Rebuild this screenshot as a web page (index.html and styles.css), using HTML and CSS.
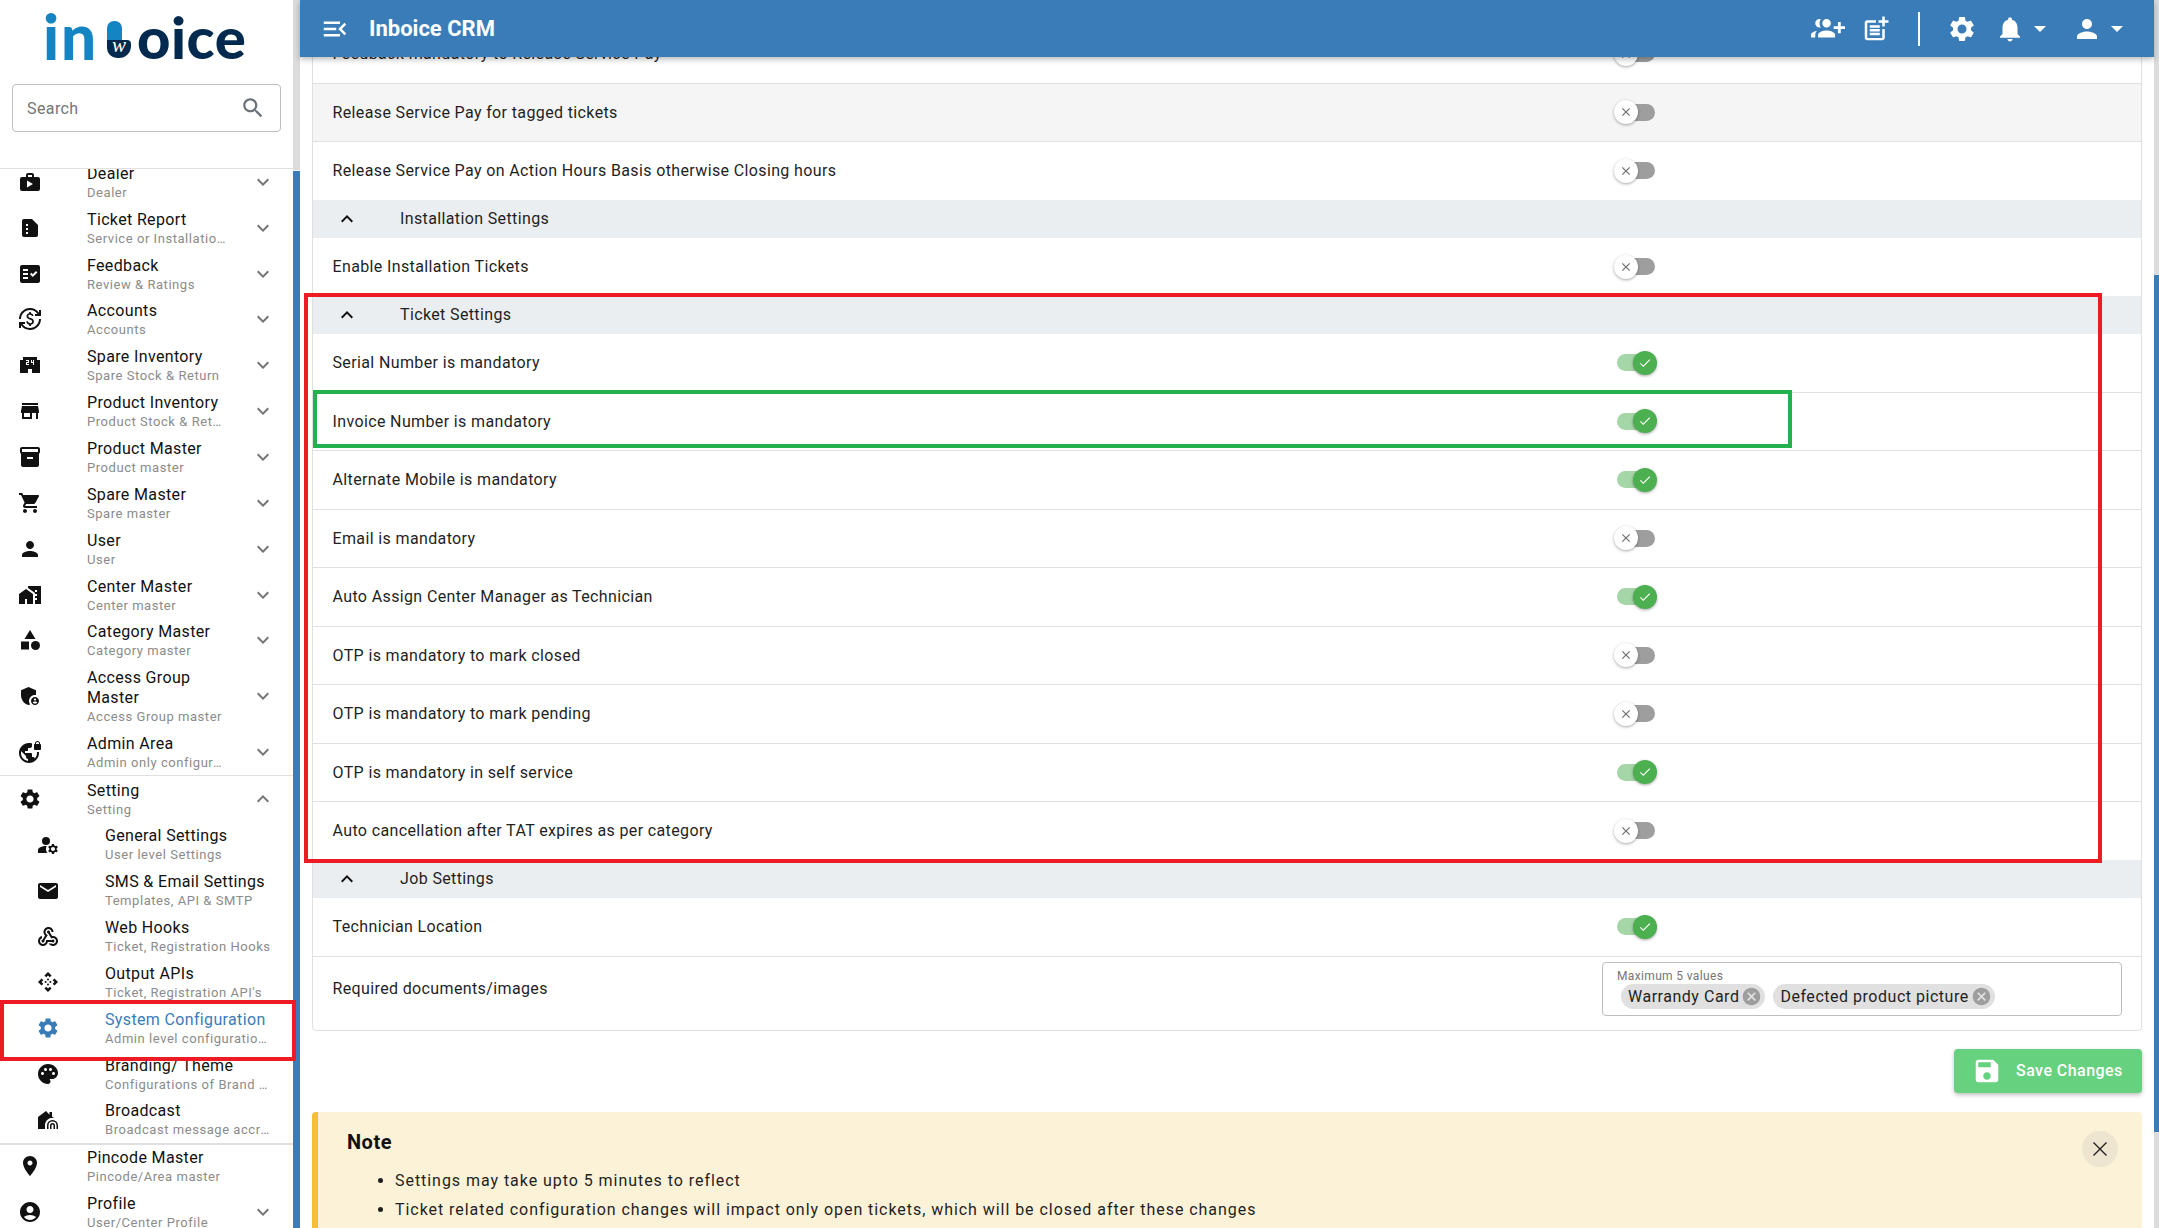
FILE: index.html
```html
<!DOCTYPE html>
<html lang="en">
<head>
    <meta charset="UTF-8">
    <meta name="viewport" content="width=device-width, initial-scale=1.0">
    <title>Inboice CRM</title>
    <link rel="stylesheet" href="styles.css">
</head>
<body>
    <svg class="sprite" xmlns="http://www.w3.org/2000/svg">
        <symbol id="i-menu-open" viewBox="0 0 24 24"><path d="M3 18h13v-2H3v2zm0-5h10v-2H3v2zm0-7v2h13V6H3zm18 9.59L17.42 12 21 8.41 19.59 7l-5 5 5 5L21 15.59z"/></symbol>
        <symbol id="i-group-add" viewBox="0 0 24 24"><path transform="matrix(-1 0 0 1 24 0)" d="M8 10H5V7H3v3H0v2h3v3h2v-3h3v-2zm10 1c1.66 0 2.99-1.34 2.99-3S19.66 5 18 5c-.32 0-.63.05-.91.14.57.81.9 1.79.9 2.86s-.34 2.04-.9 2.86c.28.09.59.14.91.14zm-5 0c1.66 0 2.99-1.34 2.99-3S14.66 5 13 5s-3 1.34-3 3 1.34 3 3 3zm6.62 2.16c.83.73 1.38 1.66 1.38 2.84v2h3v-2c0-1.54-2.37-2.49-4.38-2.84zM13 13c-2 0-6 1-6 3v2h12v-2c0-2-4-3-6-3z"/></symbol>
        <symbol id="i-post-add" viewBox="0 0 24 24"><path d="M17 19.22H5V7h7V5H5c-1.1 0-2 .9-2 2v12c0 1.1.9 2 2 2h12c1.1 0 2-.9 2-2v-7h-2v7.22z"/><path d="M19 2h-2v3h-3c.01.01 0 2 0 2h3v2.99c.01.01 2 0 2 0V7h3V5h-3V2z"/><path d="M7 9h8v2H7zM7 12h8v2H7zM7 15h8v2H7z"/></symbol>
        <symbol id="i-settings" viewBox="0 0 24 24"><path d="M19.14 12.94c.04-.3.06-.61.06-.94 0-.32-.02-.64-.07-.94l2.03-1.58c.18-.14.23-.41.12-.61l-1.92-3.32c-.12-.22-.37-.29-.59-.22l-2.39.96c-.5-.38-1.03-.7-1.62-.94l-.36-2.54c-.04-.24-.24-.41-.48-.41h-3.84c-.24 0-.43.17-.47.41l-.36 2.54c-.59.24-1.13.57-1.62.94l-2.39-.96c-.22-.08-.47 0-.59.22L2.74 8.87c-.12.21-.08.47.12.61l2.03 1.58c-.05.3-.09.63-.09.94s.02.64.07.94l-2.03 1.58c-.18.14-.23.41-.12.61l1.92 3.32c.12.22.37.29.59.22l2.39-.96c.5.38 1.03.7 1.62.94l.36 2.54c.05.24.24.41.48.41h3.84c.24 0 .44-.17.47-.41l.36-2.54c.59-.24 1.13-.56 1.62-.94l2.39.96c.22.08.47 0 .59-.22l1.92-3.32c.12-.22.07-.47-.12-.61l-2.01-1.58zM12 15.6c-1.98 0-3.6-1.62-3.6-3.6s1.62-3.6 3.6-3.6 3.6 1.62 3.6 3.6-1.62 3.6-3.6 3.6z"/></symbol>
        <symbol id="i-bell" viewBox="0 0 24 24"><path d="M12 22c1.1 0 2-.9 2-2h-4c0 1.1.89 2 2 2zm6-6v-5c0-3.07-1.64-5.64-4.5-6.32V4c0-.83-.67-1.5-1.5-1.5s-1.5.67-1.5 1.5v.68C7.63 5.36 6 7.92 6 11v5l-2 2v1h16v-1l-2-2z"/></symbol>
        <symbol id="i-person" viewBox="0 0 24 24"><path d="M12 12c2.21 0 4-1.79 4-4s-1.79-4-4-4-4 1.79-4 4 1.79 4 4 4zm0 2c-2.67 0-8 1.34-8 4v2h16v-2c0-2.66-5.33-4-8-4z"/></symbol>
        <symbol id="i-search" viewBox="0 0 24 24"><path d="M15.5 14h-.79l-.28-.27C15.41 12.59 16 11.11 16 9.5 16 5.91 13.09 3 9.5 3S3 5.91 3 9.5 5.91 16 9.5 16c1.61 0 3.09-.59 4.23-1.57l.27.28v.79l5 4.99L20.49 19l-4.99-5zm-6 0C7.01 14 5 11.99 5 9.5S7.01 5 9.5 5 14 7.01 14 9.5 11.99 14 9.5 14z"/></symbol>
        <symbol id="i-more" viewBox="0 0 24 24"><path d="M16.59 8.59 12 13.17 7.41 8.59 6 10l6 6 6-6z"/></symbol>
        <symbol id="i-less" viewBox="0 0 24 24"><path d="M12 8l-6 6 1.41 1.41L12 10.83l4.59 4.58L18 14z"/></symbol>
        <symbol id="i-dealer" viewBox="0 0 24 24"><path fill-rule="evenodd" d="M20 7h-4V5a2 2 0 0 0-2-2h-4a2 2 0 0 0-2 2v2H4a2 2 0 0 0-2 2v10a2 2 0 0 0 2 2h16a2 2 0 0 0 2-2V9a2 2 0 0 0-2-2zM10 5h4v2h-4V5zm-1 5.5v7l6-3.5-6-3.5z"/></symbol>
        <symbol id="i-report" viewBox="0 0 24 24"><path fill-rule="evenodd" d="M14 3H6a2 2 0 0 0-2 2v14a2 2 0 0 0 2 2h12a2 2 0 0 0 2-2V9l-6-6zM8 8h2v2H8V8zm0 4h2v2H8v-2zm0 4h2v2H8v-2z"/></symbol>
        <symbol id="i-fact" viewBox="0 0 24 24"><path d="M20 3H4c-1.1 0-2 .9-2 2v14c0 1.1.9 2 2 2h16c1.1 0 2-.9 2-2V5c0-1.1-.9-2-2-2zM10 17H5v-2h5v2zm0-4H5v-2h5v2zm0-4H5V7h5v2zm4.82 6L12 12.16l1.41-1.41 1.41 1.42L17.99 9l1.42 1.42L14.82 15z"/></symbol>
        <symbol id="i-exchange" viewBox="0 0 24 24"><path d="M12.89 11.1c-1.78-.59-2.64-.96-2.64-1.9 0-1.02 1.11-1.39 1.81-1.39 1.31 0 1.79.99 1.9 1.34l1.58-.67c-.15-.44-.82-1.91-2.64-2.23V5h-1.75v1.26c-2.6.56-2.62 2.85-2.62 2.96 0 2.27 2.25 2.91 3.35 3.31 1.58.56 2.28 1.07 2.28 2.03 0 1.13-1.05 1.61-1.98 1.61-1.82 0-2.34-1.87-2.4-2.09l-1.66.67c.63 2.19 2.28 2.78 3.02 2.96V19h1.75v-1.24c.52-.09 3.02-.59 3.02-3.22.01-1.39-.6-2.61-2.99-3.44zM3 21H1v-6h6v2H4.52c1.61 2.41 4.36 4 7.48 4 4.97 0 9-4.03 9-9h2c0 6.08-4.92 11-11 11-3.72 0-7.01-1.85-9-4.67V21zm-2-9C1 5.92 5.92 1 12 1c3.72 0 7.01 1.85 9 4.67V3h2v6h-6V7h2.48C17.87 4.59 15.12 3 12 3c-4.97 0-9 4.03-9 9H1z"/></symbol>
        <symbol id="i-conv" viewBox="0 0 24 24"><path d="M19 7V4H5v3H2v13h8v-4h4v4h8V7h-3zm-8 3H9v1h2v1H8V9h2V8H8V7h3v3zm5 2h-1v-2h-2V7h1v2h1V7h1v5z"/></symbol>
        <symbol id="i-store" viewBox="0 0 24 24"><path d="M20 4H4v2h16V4zm1 10v-2l-1-5H4l-1 5v2h1v6h10v-6h4v6h2v-6h1zm-9 4H6v-4h6v4z"/></symbol>
        <symbol id="i-box" viewBox="0 0 24 24"><path d="M20 2H4c-1 0-2 .9-2 2v3.01c0 .72.43 1.34 1 1.69V20c0 1.1 1.1 2 2 2h14c.9 0 2-.9 2-2V8.7c.57-.35 1-.97 1-1.69V4c0-1.1-1-2-2-2zm-5 12H9v-2h6v2zm5-7H4V4l16-.02V7z"/></symbol>
        <symbol id="i-cart" viewBox="0 0 24 24"><path d="M7 18c-1.1 0-1.99.9-1.99 2S5.9 22 7 22s2-.9 2-2-.9-2-2-2zM1 2v2h2l3.6 7.59-1.35 2.45c-.16.28-.25.61-.25.96 0 1.1.9 2 2 2h12v-2H7.42c-.14 0-.25-.11-.25-.25l.03-.12.9-1.63h7.45c.75 0 1.41-.41 1.75-1.03l3.58-6.49c.08-.14.12-.31.12-.48 0-.55-.45-1-1-1H5.21l-.94-2H1zm16 16c-1.1 0-1.99.9-1.99 2s.89 2 1.99 2 2-.9 2-2-.9-2-2-2z"/></symbol>
        <symbol id="i-home-work" viewBox="0 0 24 24"><path d="M1 11v10h6v-5h2v5h6V11L8 6z"/><path fill-rule="evenodd" d="M10 3v1.97l7 5V11h2v2h-2v2h2v2h-2v4h6V3H10zm9 6h-2V7h2v2z"/></symbol>
        <symbol id="i-category" viewBox="0 0 24 24"><path d="M12 2l-5.5 9h11z"/><circle cx="17.5" cy="17.5" r="4.5"/><path d="M3 13.5h8v8H3z"/></symbol>
        <symbol id="i-shield" viewBox="0 0 24 24"><path d="M17 11c.34 0 .67.04 1 .09V6.27L10.5 3 3 6.27v4.91c0 4.54 3.2 8.79 7.5 9.82.55-.13 1.08-.32 1.6-.55-.69-.98-1.1-2.17-1.1-3.45 0-3.31 2.69-6 6-6z"/><path d="M17 13c-2.21 0-4 1.79-4 4s1.79 4 4 4 4-1.79 4-4-1.79-4-4-4zm0 1.38c.62 0 1.12.51 1.12 1.12s-.51 1.12-1.12 1.12-1.12-.51-1.12-1.12.5-1.12 1.12-1.12zm0 5.37c-.93 0-1.74-.46-2.24-1.17.05-.72 1.51-1.08 2.24-1.08s2.19.36 2.24 1.08c-.5.71-1.31 1.17-2.24 1.17z"/></symbol>
        <symbol id="i-vpn" viewBox="0 0 24 24"><path d="M18.92 12c.04.33.08.66.08 1 0 2.08-.8 3.97-2.1 5.39-.26-.81-1-1.39-1.9-1.39h-1v-3c0-.55-.45-1-1-1H7v-2h2c.55 0 1-.45 1-1V8h2c1.1 0 2-.9 2-2V3.46c-.95-.3-1.95-.46-3-.46C5.48 3 1 7.48 1 13s4.48 10 10 10 10-4.48 10-10c0-.34-.02-.67-.05-1h-2.03zM10 20.93c-3.95-.49-7-3.85-7-7.93 0-.62.08-1.21.21-1.79L8 16v1c0 1.1.9 2 2 2v1.93zM22 4v-.5C22 2.12 20.88 1 19.5 1S17 2.12 17 3.5V4c-.55 0-1 .45-1 1v4c0 .55.45 1 1 1h5c.55 0 1-.45 1-1V5c0-.55-.45-1-1-1zm-1 0h-3v-.5c0-.83.67-1.5 1.5-1.5s1.5.67 1.5 1.5V4z"/></symbol>
        <symbol id="i-manage" viewBox="0 0 24 24"><circle cx="10" cy="8" r="4"/><path d="M10.67 13.02C10.45 13.01 10.23 13 10 13c-2.42 0-4.68.67-6.61 1.82C2.51 15.34 2 16.32 2 17.35V20h9.26c-.79-1.13-1.26-2.51-1.26-4 0-1.07.25-2.07.67-2.98z"/><path d="M20.75 16c0-.22-.03-.42-.06-.63l1.14-1.01-1-1.73-1.45.49c-.32-.27-.68-.48-1.08-.63L18 11h-2l-.3 1.49c-.4.15-.76.36-1.08.63l-1.45-.49-1 1.73 1.14 1.01c-.03.21-.06.41-.06.63s.03.42.06.63l-1.14 1.01 1 1.73 1.45-.49c.32.27.68.48 1.08.63L16 21h2l.3-1.49c.4-.15.76-.36 1.08-.63l1.45.49 1-1.73-1.14-1.01c.03-.21.06-.41.06-.63zM17 18c-1.1 0-2-.9-2-2s.9-2 2-2 2 .9 2 2-.9 2-2 2z"/></symbol>
        <symbol id="i-mail" viewBox="0 0 24 24"><path d="M20 4H4c-1.1 0-1.99.9-1.99 2L2 18c0 1.1.9 2 2 2h16c1.1 0 2-.9 2-2V6c0-1.1-.9-2-2-2zm0 4-8 5-8-5V6l8 5 8-5v2z"/></symbol>
        <symbol id="i-webhook" viewBox="0 0 24 24"><path d="M10 15h5.88c.27-.31.67-.5 1.12-.5.83 0 1.5.67 1.5 1.5s-.67 1.5-1.5 1.5c-.44 0-.84-.19-1.12-.5H11.9c-.46 2.28-2.48 4-4.9 4-2.76 0-5-2.24-5-5 0-2.42 1.72-4.44 4-4.9v2.07c-1.16.41-2 1.53-2 2.83 0 1.65 1.35 3 3 3s3-1.35 3-3v-1zm2.5-11c1.65 0 3 1.35 3 3h2c0-2.76-2.24-5-5-5s-5 2.24-5 5c0 1.43.6 2.71 1.55 3.62l-2.35 3.9c-.68.14-1.2.75-1.2 1.48 0 .83.67 1.5 1.5 1.5s1.5-.67 1.5-1.5c0-.16-.02-.31-.07-.45l3.38-5.63C10.49 9.61 9.5 8.42 9.5 7c0-1.65 1.35-3 3-3zm4.5 9c-.64 0-1.23.2-1.72.54l-3.05-5.07C11.53 8.35 11 7.74 11 7c0-.83.67-1.5 1.5-1.5S14 6.17 14 7c0 .15-.02.29-.06.43l2.19 3.65c.28-.05.57-.08.87-.08 2.76 0 5 2.24 5 5s-2.24 5-5 5c-1.85 0-3.47-1.01-4.33-2.5h2.67c.48.32 1.05.5 1.66.5 1.65 0 3-1.35 3-3s-1.35-3-3-3z"/></symbol>
        <symbol id="i-camera" viewBox="0 0 24 24"><path d="M15.54 5.54L13.77 7.3 12 5.54 10.23 7.3 8.46 5.54 12 2zm2.92 10l-1.76-1.77L18.46 12l-1.76-1.77 1.76-1.77L22 12zm-10 2.92l1.77-1.76L12 18.46l1.77-1.76 1.77 1.76L12 22zm-2.92-10l1.76 1.77L5.54 12l1.76 1.77-1.76 1.77L2 12z"/><circle cx="12" cy="9.6" r="1"/><circle cx="12" cy="14.4" r="1"/><circle cx="9.6" cy="12" r="1"/><circle cx="14.4" cy="12" r="1"/></symbol>
        <symbol id="i-palette" viewBox="0 0 24 24"><path d="M12 2C6.49 2 2 6.49 2 12s4.49 10 10 10c1.38 0 2.5-1.12 2.5-2.5 0-.61-.23-1.2-.64-1.67-.08-.1-.13-.21-.13-.33 0-.28.22-.5.5-.5H16c3.31 0 6-2.69 6-6 0-4.96-4.49-9-10-9zm5.5 11c-.83 0-1.5-.67-1.5-1.5s.67-1.5 1.5-1.5 1.5.67 1.5 1.5-.67 1.5-1.5 1.5zm-3-4c-.83 0-1.5-.67-1.5-1.5S13.67 6 14.5 6s1.5.67 1.5 1.5S15.33 9 14.5 9zM5 11.5c0-.83.67-1.5 1.5-1.5s1.5.67 1.5 1.5S7.33 13 6.5 13 5 12.33 5 11.5zm6-4c0 .83-.67 1.5-1.5 1.5S8 8.33 8 7.5 8.67 6 9.5 6s1.5.67 1.5 1.5z"/></symbol>
        <symbol id="i-broadcast" viewBox="0 0 24 24"><path d="M10 3 2 9v12h7v-3.5c0-3.6 2.4-6.7 6-7.4h2.8L16 8.6V4h-2.5v2.7z"/><path d="M11 21v-3.500a5.500 5.500 0 0 1 11 0V21h-1.500v-3.500a4 4 0 0 0-8 0V21z"/><path d="M14 21v-3.500a2.500 2.500 0 0 1 5 0V21h-1.500v-3.500a1 1 0 0 0-2 0V21z"/></symbol>
        <symbol id="i-place" viewBox="0 0 24 24"><path d="M12 2C8.13 2 5 5.13 5 9c0 5.25 7 13 7 13s7-7.750 7-13c0-3.870-3.130-7-7-7zm0 9.500c-1.380 0-2.500-1.120-2.500-2.500s1.120-2.500 2.500-2.500 2.500 1.120 2.500 2.500-1.120 2.500-2.500 2.500z"/></symbol>
        <symbol id="i-account" viewBox="0 0 24 24"><path d="M12 2C6.48 2 2 6.48 2 12s4.48 10 10 10 10-4.48 10-10S17.52 2 12 2zm0 4c1.93 0 3.5 1.57 3.5 3.5S13.93 13 12 13s-3.5-1.57-3.5-3.5S10.07 6 12 6zm0 14c-2.03 0-4.43-.82-6.14-2.88C7.55 15.8 9.68 15 12 15s4.45.8 6.14 2.12C16.43 19.18 14.03 20 12 20z"/></symbol>
        <symbol id="i-save" viewBox="0 0 24 24"><path d="M17 3H5c-1.11 0-2 .9-2 2v14c0 1.100.89 2 2 2h14c1.100 0 2-.9 2-2V7l-4-4zm-5 16c-1.660 0-3-1.340-3-3s1.340-3 3-3 3 1.340 3 3-1.340 3-3 3zm3-10H5V5h10v4z"/></symbol>
        <symbol id="i-cancel" viewBox="0 0 24 24"><path d="M12 2C6.470 2 2 6.470 2 12s4.470 10 10 10 10-4.470 10-10S17.530 2 12 2zm5 13.590L15.590 17 12 13.410 8.410 17 7 15.590 10.590 12 7 8.410 8.410 7 12 10.590 15.590 7 17 8.410 13.410 12 17 15.590z"/></symbol>
        <symbol id="i-close" viewBox="0 0 24 24"><path d="M19 6.410 17.590 5 12 10.590 6.410 5 5 6.410 10.590 12 5 17.590 6.410 19 12 13.410 17.590 19 19 17.590 13.410 12z"/></symbol>
        <symbol id="i-close-thin" viewBox="0 0 24 24"><path d="M5.500 5.500l13 13M18.500 5.500l-13 13" fill="none" stroke="currentColor" stroke-width="1.400"/></symbol>
        <symbol id="i-check" viewBox="0 0 24 24"><path d="M9 16.170 4.830 12l-1.420 1.410L9 19 21 7l-1.410-1.410z"/></symbol>
    </svg>

    <div class="app">
        <aside class="sidebar">
            <div class="side-col">
                <div class="side-top">
                    <div class="logo">
                        <span class="logo-in">in</span>
                        <span class="logo-b"><span class="logo-stem"></span><span class="logo-bowl">w</span></span>
                        <span class="logo-oice">oice</span>
                    </div>
                    <div class="search">
                        <span>Search</span>
                        <svg class="search-icon"><use href="#i-search"/></svg>
                    </div>
                </div>
                <nav class="nav">
                    <div class="nav-list">
                        <div class="item"><svg class="item-icon"><use href="#i-dealer"/></svg><div class="item-text"><div class="item-title">Dealer</div><div class="item-sub">Dealer</div></div><svg class="chev"><use href="#i-more"/></svg></div>
                        <div class="item"><svg class="item-icon"><use href="#i-report"/></svg><div class="item-text"><div class="item-title">Ticket Report</div><div class="item-sub">Service or Installation Report</div></div><svg class="chev"><use href="#i-more"/></svg></div>
                        <div class="item"><svg class="item-icon"><use href="#i-fact"/></svg><div class="item-text"><div class="item-title">Feedback</div><div class="item-sub">Review &amp; Ratings</div></div><svg class="chev"><use href="#i-more"/></svg></div>
                        <div class="item"><svg class="item-icon"><use href="#i-exchange"/></svg><div class="item-text"><div class="item-title">Accounts</div><div class="item-sub">Accounts</div></div><svg class="chev"><use href="#i-more"/></svg></div>
                        <div class="item"><svg class="item-icon"><use href="#i-conv"/></svg><div class="item-text"><div class="item-title">Spare Inventory</div><div class="item-sub">Spare Stock &amp; Return</div></div><svg class="chev"><use href="#i-more"/></svg></div>
                        <div class="item"><svg class="item-icon"><use href="#i-store"/></svg><div class="item-text"><div class="item-title">Product Inventory</div><div class="item-sub">Product Stock &amp; Return</div></div><svg class="chev"><use href="#i-more"/></svg></div>
                        <div class="item"><svg class="item-icon"><use href="#i-box"/></svg><div class="item-text"><div class="item-title">Product Master</div><div class="item-sub">Product master</div></div><svg class="chev"><use href="#i-more"/></svg></div>
                        <div class="item"><svg class="item-icon"><use href="#i-cart"/></svg><div class="item-text"><div class="item-title">Spare Master</div><div class="item-sub">Spare master</div></div><svg class="chev"><use href="#i-more"/></svg></div>
                        <div class="item"><svg class="item-icon"><use href="#i-person"/></svg><div class="item-text"><div class="item-title">User</div><div class="item-sub">User</div></div><svg class="chev"><use href="#i-more"/></svg></div>
                        <div class="item"><svg class="item-icon"><use href="#i-home-work"/></svg><div class="item-text"><div class="item-title">Center Master</div><div class="item-sub">Center master</div></div><svg class="chev"><use href="#i-more"/></svg></div>
                        <div class="item"><svg class="item-icon"><use href="#i-category"/></svg><div class="item-text"><div class="item-title">Category Master</div><div class="item-sub">Category master</div></div><svg class="chev"><use href="#i-more"/></svg></div>
                        <div class="item item-tall"><svg class="item-icon"><use href="#i-shield"/></svg><div class="item-text"><div class="item-title">Access Group Master</div><div class="item-sub">Access Group master</div></div><svg class="chev"><use href="#i-more"/></svg></div>
                        <div class="item"><svg class="item-icon"><use href="#i-vpn"/></svg><div class="item-text"><div class="item-title">Admin Area</div><div class="item-sub">Admin only configurations</div></div><svg class="chev"><use href="#i-more"/></svg></div>
                        <div class="group">
                            <div class="item"><svg class="item-icon"><use href="#i-settings"/></svg><div class="item-text"><div class="item-title">Setting</div><div class="item-sub">Setting</div></div><svg class="chev"><use href="#i-less"/></svg></div>
                            <div class="item sub"><svg class="item-icon"><use href="#i-manage"/></svg><div class="item-text"><div class="item-title">General Settings</div><div class="item-sub">User level Settings</div></div></div>
                            <div class="item sub"><svg class="item-icon"><use href="#i-mail"/></svg><div class="item-text"><div class="item-title">SMS &amp; Email Settings</div><div class="item-sub">Templates, API &amp; SMTP</div></div></div>
                            <div class="item sub"><svg class="item-icon"><use href="#i-webhook"/></svg><div class="item-text"><div class="item-title">Web Hooks</div><div class="item-sub">Ticket, Registration Hooks</div></div></div>
                            <div class="item sub"><svg class="item-icon"><use href="#i-camera"/></svg><div class="item-text"><div class="item-title">Output APIs</div><div class="item-sub">Ticket, Registration API's</div></div></div>
                            <div class="item sub active"><svg class="item-icon"><use href="#i-settings"/></svg><div class="item-text"><div class="item-title">System Configuration</div><div class="item-sub">Admin level configuration settings</div></div></div>
                            <div class="item sub"><svg class="item-icon"><use href="#i-palette"/></svg><div class="item-text"><div class="item-title">Branding/ Theme</div><div class="item-sub">Configurations of Brand and theme</div></div></div>
                            <div class="item sub"><svg class="item-icon"><use href="#i-broadcast"/></svg><div class="item-text"><div class="item-title">Broadcast</div><div class="item-sub">Broadcast message accross users</div></div></div>
                        </div>
                        <div class="item"><svg class="item-icon"><use href="#i-place"/></svg><div class="item-text"><div class="item-title">Pincode Master</div><div class="item-sub">Pincode/Area master</div></div></div>
                        <div class="item"><svg class="item-icon"><use href="#i-account"/></svg><div class="item-text"><div class="item-title">Profile</div><div class="item-sub">User/Center Profile</div></div><svg class="chev"><use href="#i-more"/></svg></div>
                    </div>
                </nav>
            </div>
            <div class="side-bar"><div class="side-track"></div><div class="side-thumb"></div></div>
        </aside>

        <div class="main">
            <header class="topbar">
                <svg class="top-icon menu-icon"><use href="#i-menu-open"/></svg>
                <h1>Inboice CRM</h1>
                <div class="top-actions">
                    <svg class="top-icon group-icon"><use href="#i-group-add"/></svg>
                    <svg class="top-icon"><use href="#i-post-add"/></svg>
                    <span class="top-sep"></span>
                    <svg class="top-icon"><use href="#i-settings"/></svg>
                    <span class="top-menu"><svg class="top-icon"><use href="#i-bell"/></svg><i class="caret"></i></span>
                    <span class="top-menu"><svg class="top-icon"><use href="#i-person"/></svg><i class="caret"></i></span>
                </div>
            </header>
            <main class="content">
                <section class="card">
                    <div class="row"><span>Feedback mandatory to Release Service Pay</span><label class="toggle"><i class="knob"><svg><use href="#i-close"/></svg></i></label></div>
                    <div class="row shaded"><span>Release Service Pay for tagged tickets</span><label class="toggle"><i class="knob"><svg><use href="#i-close"/></svg></i></label></div>
                    <div class="row last"><span>Release Service Pay on Action Hours Basis otherwise Closing hours</span><label class="toggle"><i class="knob"><svg><use href="#i-close"/></svg></i></label></div>

                    <div class="sect"><svg><use href="#i-less"/></svg><span>Installation Settings</span></div>
                    <div class="row last"><span>Enable Installation Tickets</span><label class="toggle"><i class="knob"><svg><use href="#i-close"/></svg></i></label></div>

                    <div class="sect"><svg><use href="#i-less"/></svg><span>Ticket Settings</span></div>
                    <div class="row"><span>Serial Number is mandatory</span><label class="toggle on"><i class="knob"><svg><use href="#i-check"/></svg></i></label></div>
                    <div class="row"><span>Invoice Number is mandatory</span><label class="toggle on"><i class="knob"><svg><use href="#i-check"/></svg></i></label></div>
                    <div class="row"><span>Alternate Mobile is mandatory</span><label class="toggle on"><i class="knob"><svg><use href="#i-check"/></svg></i></label></div>
                    <div class="row"><span>Email is mandatory</span><label class="toggle"><i class="knob"><svg><use href="#i-close"/></svg></i></label></div>
                    <div class="row"><span>Auto Assign Center Manager as Technician</span><label class="toggle on"><i class="knob"><svg><use href="#i-check"/></svg></i></label></div>
                    <div class="row"><span>OTP is mandatory to mark closed</span><label class="toggle"><i class="knob"><svg><use href="#i-close"/></svg></i></label></div>
                    <div class="row"><span>OTP is mandatory to mark pending</span><label class="toggle"><i class="knob"><svg><use href="#i-close"/></svg></i></label></div>
                    <div class="row"><span>OTP is mandatory in self service</span><label class="toggle on"><i class="knob"><svg><use href="#i-check"/></svg></i></label></div>
                    <div class="row last"><span>Auto cancellation after TAT expires as per category</span><label class="toggle"><i class="knob"><svg><use href="#i-close"/></svg></i></label></div>

                    <div class="sect"><svg><use href="#i-less"/></svg><span>Job Settings</span></div>
                    <div class="row"><span>Technician Location</span><label class="toggle on"><i class="knob"><svg><use href="#i-check"/></svg></i></label></div>
                    <div class="row docs last">
                        <span>Required documents/images</span>
                        <div class="tags">
                            <div class="tags-label">Maximum 5 values</div>
                            <div class="chips">
                                <span class="chip">Warrandy Card<svg><use href="#i-cancel"/></svg></span>
                                <span class="chip">Defected product picture<svg><use href="#i-cancel"/></svg></span>
                            </div>
                        </div>
                    </div>
                </section>

                <div class="actions">
                    <button class="save" type="button"><svg><use href="#i-save"/></svg>Save Changes</button>
                </div>

                <section class="note">
                    <h2>Note</h2>
                    <ul>
                        <li>Settings may take upto 5 minutes to reflect</li>
                        <li>Ticket related configuration changes will impact only open tickets, which will be closed after these changes</li>
                    </ul>
                    <button class="note-close" type="button"><svg><use href="#i-close-thin"/></svg></button>
                </section>
            </main>
        </div>
        <div class="page-bar"><div class="page-thumb"></div></div>

        <!-- annotation boxes drawn on top of the screenshot -->
        <div class="mark mark-side"></div>
        <div class="mark mark-ticket"></div>
        <div class="mark mark-invoice"></div>
    </div>
</body>
</html>
```

FILE: styles.css
```css
* {
    box-sizing: border-box;
}

html, body {
    margin: 0;
    padding: 0;
    height: 100%;
    overflow: hidden;
}

body {
    font-family: 'Roboto', 'Liberation Sans', sans-serif;
    font-size: 16px;
    color: #1f1f1f;
    background: #fff;
}

.sprite {
    display: none;
}

svg {
    fill: currentColor;
    display: block;
    flex: none;
}

.app {
    position: relative;
    display: flex;
    height: 100vh;
    overflow: hidden;
}

/* sidebar */

.sidebar {
    display: flex;
    width: 300px;
    flex: none;
}

.side-col {
    width: 293px;
    display: flex;
    flex-direction: column;
}

.side-top {
    height: 169px;
    flex: none;
    padding: 13px 12px 0 12px;
    border-bottom: 1px solid #e0e0e0;
}

.logo {
    display: flex;
    align-items: flex-end;
    height: 47px;
    margin-left: 31px;
    font-family: 'Lato', 'Open Sans', sans-serif;
    font-weight: 900;
    font-size: 58px;
    line-height: 47px;
}

.logo-in {
    color: #1584c2;
    width: 64px;
    font-size: 62px;
    letter-spacing: 2px;
}

.logo-oice {
    color: #012a4e;
    letter-spacing: 0.5px;
}

.logo-b {
    position: relative;
    width: 30px;
    height: 46px;
}

.logo-stem {
    position: absolute;
    left: 0;
    top: 7px;
    width: 15px;
    height: 26px;
    border-radius: 7px 7px 0 0;
    background: #1584c2;
}

.logo-bowl {
    position: absolute;
    left: 0;
    bottom: 2px;
    width: 24px;
    height: 18px;
    border-radius: 0 4px 12px 10px;
    background: #012a4e;
    color: #fff;
    font-family: 'Liberation Serif', serif;
    font-style: italic;
    font-weight: 400;
    font-size: 21px;
    line-height: 10px;
    text-align: center;
}

.search {
    display: flex;
    align-items: center;
    justify-content: space-between;
    height: 48px;
    margin-top: 24px;
    padding: 0 14px 0 14px;
    border: 1px solid #bdbdbd;
    border-radius: 4px;
    color: #757575;
    letter-spacing: 0.4px;
}

.search-icon {
    width: 26px;
    height: 26px;
    color: #6a7078;
}

.nav {
    flex: 1;
    overflow: hidden;
}

.nav-list {
    margin-top: -10px;
}

.item {
    display: flex;
    align-items: center;
    height: 45.85px;
    padding-left: 18px;
    color: #111;
}

.item-tall {
    height: 66px;
}

.item-icon {
    width: 24px;
    height: 24px;
    margin-right: 45px;
}

.item-text {
    width: 141px;
    min-width: 0;
    padding-top: 1px;
}

.group .item-text {
    padding-top: 0;
}

.item-title {
    line-height: 20px;
    letter-spacing: 0.35px;
}

.item-sub {
    font-size: 13px;
    line-height: 17px;
    color: #8b8b8b;
    letter-spacing: 0.55px;
    white-space: nowrap;
    overflow: hidden;
    text-overflow: ellipsis;
}

.chev {
    width: 24px;
    height: 24px;
    margin-left: 23px;
    color: #757575;
}

.group {
    border-top: 1px solid #e0e0e0;
    border-bottom: 2px solid #e0e0e0;
    margin-bottom: -1.500px;
}

.sub {
    padding-left: 36px;
}

.group .sub .item-text {
    width: 168px;
}

.sub .item-title {
    white-space: nowrap;
}

.active {
    color: #3a7cb8;
}

.side-bar {
    width: 7px;
    display: flex;
    flex-direction: column;
    gap: 1px;
}

.side-track {
    height: 170px;
    flex: none;
    background: #dcdcdc;
}

.side-thumb {
    flex: 1;
    background: #3a7cb8;
}

/* main */

.main {
    flex: 1;
    min-width: 0;
    display: flex;
    flex-direction: column;
}

.topbar {
    position: relative;
    z-index: 2;
    display: flex;
    align-items: center;
    height: 57px;
    flex: none;
    padding: 0 31.500px 0 20px;
    background: #3a7cb8;
    color: #fff;
    box-shadow: 0 2px 6px rgba(0, 0, 0, 0.3);
}

.topbar h1 {
    margin: 0 0 0 19px;
    font-size: 22px;
    font-weight: 700;
    letter-spacing: 0;
}

.top-actions {
    display: flex;
    align-items: center;
    margin-left: auto;
    gap: 20px;
}

.top-icon {
    width: 30px;
    height: 30px;
}

.group-icon {
    width: 34px;
    height: 34px;
    margin-right: -4.500px;
}

.top-sep {
    width: 2px;
    height: 34px;
    background: #fff;
    margin: 0 7px;
}

.top-menu {
    display: flex;
    align-items: center;
    gap: 9px;
    margin-left: -2px;
}

.top-menu + .top-menu {
    margin-left: 6px;
}

.caret {
    width: 0;
    height: 0;
    border-left: 6px solid transparent;
    border-right: 6px solid transparent;
    border-top: 6px solid #fff;
}

.content {
    flex: 1;
    min-height: 0;
    overflow: hidden;
    padding: 0 12px 0 12px;
}

.card {
    margin-top: -33px;
    border: 1px solid #e0e0e0;
    border-radius: 4px;
}

.row {
    display: grid;
    grid-template-columns: 1fr 520px;
    align-items: center;
    height: 58.5px;
    padding: 0 19px 0 19.500px;
    border-bottom: 1px solid #e0e0e0;
    letter-spacing: 0.37px;
}

.row.last {
    border-bottom: none;
    height: 57.5px;
}

.row.shaded {
    background: #f5f5f5;
}

.docs.last {
    height: 73px;
    padding-bottom: 9px;
}

.sect {
    display: flex;
    align-items: center;
    height: 38.5px;
    padding-left: 22px;
    background: #ebeef1;
    letter-spacing: 0.37px;
}

.sect svg {
    width: 24px;
    height: 24px;
    margin-right: 41px;
    color: #111;
}

/* switches */

.toggle {
    position: relative;
    display: block;
    width: 38px;
    height: 17px;
    margin-left: 15px;
    border-radius: 9px;
    background: #9e9e9e;
}

.toggle.on {
    background: #a5d6a7;
}

.knob {
    position: absolute;
    left: -3px;
    top: -3.500px;
    display: flex;
    align-items: center;
    justify-content: center;
    width: 24px;
    height: 24px;
    border-radius: 50%;
    background: #fff;
    color: #6d6d6d;
    box-shadow: 0 1px 3px rgba(0, 0, 0, 0.35);
}

.knob svg {
    width: 14px;
    height: 14px;
}

.toggle.on .knob {
    left: 16px;
    background: #4caf50;
    color: #fff;
}

/* tags input */

.tags {
    height: 54px;
    padding: 6px 10px 0 14px;
    border: 1px solid #bdbdbd;
    border-radius: 4px;
}

.tags-label {
    font-size: 12px;
    line-height: 14px;
    color: #757575;
    letter-spacing: 0.35px;
}

.chips {
    display: flex;
    gap: 8px;
    margin-left: 4px;
    margin-top: 1px;
}

.chip {
    display: flex;
    align-items: center;
    gap: 2px;
    height: 25px;
    padding: 0 3px 0 7px;
    border-radius: 13px;
    background: #e0e0e0;
    color: #1f1f1f;
    letter-spacing: 0.52px;
}

.chip svg {
    width: 21px;
    height: 21px;
    color: #9e9e9e;
}

/* save button + note */

.actions {
    display: flex;
    justify-content: flex-end;
    margin-top: 18px;
}

.save {
    display: flex;
    align-items: center;
    gap: 14px;
    width: 188px;
    height: 44px;
    padding: 0 0 0 18px;
    border: none;
    border-radius: 4px;
    background: #66d17f;
    color: #fff;
    font-family: inherit;
    font-size: 16px;
    font-weight: 500;
    letter-spacing: 0.45px;
    box-shadow: 0 2px 4px rgba(0, 0, 0, 0.25);
}

.save svg {
    width: 30px;
    height: 30px;
}

.note {
    position: relative;
    margin-top: 19px;
    height: 160px;
    padding: 17px 0 0 29px;
    background: #fcf2d8;
    border-left: 6px solid #f4c033;
    border-radius: 4px;
    letter-spacing: 0.95px;
}

.note h2 {
    margin: 0;
    font-size: 20px;
    line-height: 26px;
    font-weight: 700;
    color: #111;
    letter-spacing: 0.5px;
}

.note ul {
    margin: 11px 0 0 0;
    padding-left: 48px;
}

.note li {
    line-height: 29px;
}

.note-close {
    position: absolute;
    top: 19px;
    right: 24px;
    display: flex;
    align-items: center;
    justify-content: center;
    width: 36px;
    height: 36px;
    padding: 0;
    border: none;
    border-radius: 50%;
    background: #eee5d0;
    color: #222;
}

.note-close svg {
    width: 24px;
    height: 24px;
}

.page-bar {
    width: 5px;
    flex: none;
    background: #dcdcdc;
    padding-top: 275px;
}

.page-thumb {
    height: 857px;
    background: #3a7cb8;
}

/* annotation boxes */

.mark {
    position: absolute;
    z-index: 3;
    border: 4px solid #ed1c24;
    pointer-events: none;
}

.mark-side {
    left: 0;
    top: 1000px;
    width: 296px;
    height: 61px;
}

.mark-ticket {
    left: 304px;
    top: 293px;
    width: 1798px;
    height: 570px;
}

.mark-invoice {
    left: 313px;
    top: 390px;
    width: 1479px;
    height: 58px;
    border-color: #22b14c;
}
```
